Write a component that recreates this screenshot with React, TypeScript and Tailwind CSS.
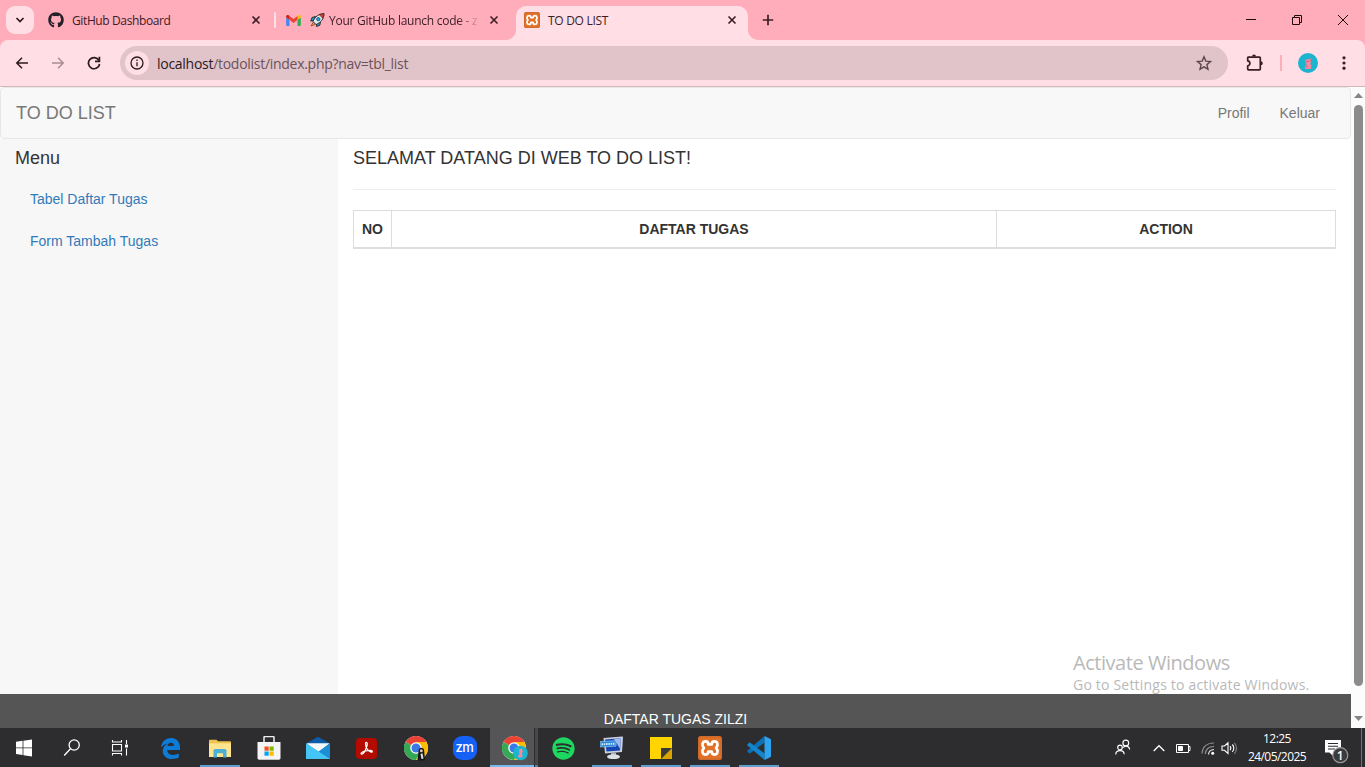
import React from "react";
import { FaGithub, FaSpotify } from "react-icons/fa";

const ui = "font-['Open_Sans','Noto_Sans',sans-serif]";

function CloseMark() {
  return (
    <svg className="block size-[10px] shrink-0" viewBox="0 0 10 10" fill="none" stroke="#3a1d25" strokeWidth="1.6">
      <path d="M1.500 1.500 8.500 8.500M8.500 1.500 1.500 8.500" />
    </svg>
  );
}

function GmailIcon() {
  return (
    <svg className="block h-[11px] w-[15px] shrink-0" viewBox="0 0 16 12">
      <path d="M1 12h2.600V5.300L0 2.600V11a1 1 0 0 0 1 1Z" fill="#4285f4" />
      <path d="M12.400 12H15a1 1 0 0 0 1-1V2.600l-3.600 2.700Z" fill="#34a853" />
      <path d="M12.400 1v4.300L16 2.600V1.500C16 .2 14.400-.5 13.300.3Z" fill="#fbbc04" />
      <path d="M3.600 5.300V1L8 4.300 12.400 1v4.300L8 8.600Z" fill="#ea4335" />
      <path d="M0 1.500v1.100l3.600 2.700V1L2.700.3C1.600-.5 0 .2 0 1.500Z" fill="#c5221f" />
    </svg>
  );
}

function RocketIcon() {
  return (
    <svg className="block h-[14px] w-[15px] shrink-0" viewBox="0 0 15 14">
      <path d="M5.500 3.500 2 4.500.7 8l3-.3ZM10.500 8.500l-.6 3.700-3.400 1.300.3-3Z" fill="#1f9fd4" stroke="#222" strokeWidth=".9" />
      <path d="M3.500 9 1 13l4.500-1.700Z" fill="#ffb02e" stroke="#7a2a10" strokeWidth=".7" />
      <path d="M3 8.500C5 3.500 8.500 1 14 .7 13.700 6 11 9.500 6 11.500Z" fill="#d8edf3" stroke="#222" strokeWidth=".9" />
      <path d="M9.300 1.700C11 1 12.300.8 14 .7c-.1 1.800-.5 3.200-1.200 4.600Z" fill="#e03a2e" stroke="#222" strokeWidth=".6" />
      <circle cx="8.300" cy="6.200" r="1.700" fill="#26a4df" stroke="#222" strokeWidth=".6" />
    </svg>
  );
}

function XamppIcon({ className }: { className: string }) {
  return (
    <svg className={"block shrink-0 " + className} viewBox="0 0 24 24">
      <rect width="24" height="24" rx="2.500" fill="#cf6a2c" />
      <rect x="1.500" y="1.500" width="21" height="21" rx="2" fill="#e27128" />
      <path
        d="M7.600 5.400c-3.300 0-4.200 4-1.700 6.600-2.500 2.600-1.600 6.600 1.700 6.600 2 0 2.700-1.300 2.700-3h3.400c0 1.700.7 3 2.700 3 3.300 0 4.200-4 1.700-6.600 2.500-2.600 1.600-6.600-1.700-6.600-2 0-2.700 1.300-2.700 3h-3.400c0-1.700-.7-3-2.700-3Z"
        fill="none"
        stroke="#fff"
        strokeWidth="2.700"
        strokeLinejoin="round"
      />
    </svg>
  );
}

function TabFlare({ flip = false }: { flip?: boolean }) {
  return (
    <svg className={flip ? "block size-[10px] shrink-0 -scale-x-100" : "block size-[10px] shrink-0"} viewBox="0 0 10 10">
      <path d="M10 0v10H0A10 10 0 0 0 10 0Z" fill="#ffdee5" />
    </svg>
  );
}

function TabStrip() {
  return (
    <div className="flex h-10 shrink-0 items-center bg-[#ffacbb] text-[12px] text-[#3a1d25]">
      <div className="ml-[6px] flex size-7 items-center justify-center rounded-[9px] bg-[#ffdee5]">
        <svg className="size-[10px]" viewBox="0 0 10 10" fill="none" stroke="#301820" strokeWidth="1.700">
          <path d="m1.500 3 3.500 3.500L8.500 3" />
        </svg>
      </div>
      <div className="ml-[14px] flex w-[213px] items-center">
        <FaGithub className="block size-4 shrink-0 text-[#24202a]" />
        <span className="ml-2 grow pt-[2px] tracking-[-0.38px] whitespace-nowrap">GitHub Dashboard</span>
        <CloseMark />
      </div>
      <div className="ml-[13px] h-4 w-[2px] rounded bg-[#ffdee5]" />
      <div className="ml-[10px] flex w-[213px] items-center">
        <GmailIcon />
        <span className="ml-[9px] block">
          <RocketIcon />
        </span>
        <span className="ml-[4px] pt-[2px] tracking-[-0.26px] whitespace-nowrap [mask-image:linear-gradient(to_right,black_128px,transparent_152px)]">
          Your GitHub launch code - z
        </span>
        <span className="ml-auto block">
          <CloseMark />
        </span>
      </div>
      <div className="ml-[7px] flex h-[34px] items-end self-end">
        <TabFlare />
        <div className="flex h-[34px] w-[232px] items-center rounded-t-[10px] bg-[#ffdee5] pr-[11px] pb-[6px] pl-2">
          <XamppIcon className="size-4" />
          <span className="ml-2 grow pt-[2px] tracking-[-0.3px] whitespace-nowrap">TO DO LIST</span>
          <CloseMark />
        </div>
        <TabFlare flip />
      </div>
      <svg className="ml-1 size-3" viewBox="0 0 12 12" stroke="#3a1d25" strokeWidth="1.700">
        <path d="M6 .8v10.400M.8 6h10.400" />
      </svg>
      <div className="ml-auto flex h-full items-center">
        <svg className="h-10 w-[46px]" viewBox="0 0 46 40" stroke="#1c0c10">
          <path d="M18 19.500h10" />
        </svg>
        <svg className="h-10 w-[46px]" viewBox="0 0 46 40" fill="none" stroke="#1c0c10">
          <path d="M18.500 17.500h7v7h-7zM20.500 17v-1.500h7v7H26" />
        </svg>
        <svg className="h-10 w-[45px]" viewBox="0 0 45 40" stroke="#1c0c10">
          <path d="m18 15 10 10M28 15 18 25" />
        </svg>
      </div>
    </div>
  );
}

function AvatarArt() {
  return (
    <svg className="block size-full" viewBox="0 0 20 20">
      <circle cx="10" cy="10" r="10" fill="#1cb5cf" />
      <path d="M7.300 8.500c0-1.500 1-2.300 2.500-2.100L13 5.500l.5 2.700-1.300 2 1.200 2.800-.6 3H7.500L6.700 13.500l2-2Z" fill="#f48a9f" />
      <path d="m8.200 8.700 2.500-.4M7.500 13l2 .8M12.600 6.500l.3 2" stroke="#b54263" strokeWidth=".8" />
    </svg>
  );
}

function Toolbar() {
  return (
    <div className="shrink-0 bg-[#ffacbb]">
      <div className="flex h-[47px] items-center rounded-t-[8px] border-b border-[#d5b6bd] bg-[#ffdee5]">
        <svg className="ml-[15px] size-[14px]" viewBox="0 0 14 14" fill="none" stroke="#2b1a20" strokeWidth="1.500">
          <path d="M13 7H2M7 1.800 1.800 7 7 12.200" />
        </svg>
        <svg className="ml-[22px] size-[14px]" viewBox="0 0 14 14" fill="none" stroke="#a98d94" strokeWidth="1.500">
          <path d="M1 7h11M7 1.800 12.200 7 7 12.200" />
        </svg>
        <svg className="ml-[22px] size-[14px]" viewBox="0 0 14 14" fill="none" stroke="#2b1a20" strokeWidth="1.700">
          <path d="M11.900 4.300A5.600 5.600 0 1 0 12.600 8" />
          <path d="M12.400.8v4.500H8" />
        </svg>
        <div className="ml-[19px] flex h-[34px] w-[1108px] items-center rounded-full bg-[#e0c4ca] pr-[16px] pl-[5px]">
          <span className="flex size-6 items-center justify-center rounded-full bg-[#ffdee5]">
            <svg className="size-[14px]" viewBox="0 0 14 14" fill="none" stroke="#2b1a20" strokeWidth="1.300">
              <circle cx="7" cy="7" r="6" />
              <path d="M7 6.300v4M7 3.500v1.500" />
            </svg>
          </span>
          <span className="ml-[8px] grow text-[14px] tracking-[-0.28px] text-[#6c5259]">
            <span className="text-[#2b1a20]">localhost</span>/todolist/index.php?nav=tbl_list
          </span>
          <svg className="size-4" viewBox="0 0 16 16" fill="none" stroke="#5f474e" strokeWidth="1.400">
            <path d="m8 1.800 1.800 4.300 4.700.4-3.600 3.100 1.100 4.600L8 11.800l-4 2.400 1.100-4.600L1.500 6.500l4.700-.4Z" />
          </svg>
        </div>
        <svg className="ml-[18px] h-[18px] w-[18px]" viewBox="0 0 18 18" fill="none" stroke="#3a1d25" strokeWidth="1.700">
          <path d="M2 3.200h11.500c.5 0 .8.300.8.800v11c0 .5-.3.800-.8.800H2.500c-.5 0-.8-.3-.8-.8v-3.200c2.900-.3 2.900-4.600 0-4.900V3.800Z" strokeLinejoin="round" />
          <path d="M6 2.600a2 2 0 0 1 4 0ZM14.800 7.300a2 2 0 0 1 0 4Z" fill="#3a1d25" stroke="none" />
        </svg>
        <div className="ml-[16px] h-4 w-[2px] bg-[#ffacbb]" />
        <div className="ml-[16px] size-5">
          <AvatarArt />
        </div>
        <svg className="ml-[24px] h-[14px] w-1" viewBox="0 0 4 14" fill="#3a1d25">
          <circle cx="2" cy="1.800" r="1.600" />
          <circle cx="2" cy="7" r="1.600" />
          <circle cx="2" cy="12.200" r="1.600" />
        </svg>
      </div>
    </div>
  );
}

function Scrollbar() {
  return (
    <div className="flex w-[14px] shrink-0 flex-col items-center bg-[#fcfcfc]">
      <svg className="mt-[6px] h-[5px] w-[9px]" viewBox="0 0 9 5">
        <path d="M4.500 0 9 5H0Z" fill="#858585" />
      </svg>
      <div className="mt-[7px] h-[581px] w-[9px] rounded-full bg-[#8b8b8b]" />
      <svg className="mt-[30px] h-[5px] w-[9px]" viewBox="0 0 9 5">
        <path d="M4.500 5 0 0h9Z" fill="#858585" />
      </svg>
    </div>
  );
}

function WebPage() {
  return (
    <div className="flex min-h-0 grow bg-white font-['Liberation_Sans',sans-serif] text-[14px] leading-5 text-[#333]">
      <div className="flex min-w-0 grow flex-col">
        <nav className="flex h-[52px] shrink-0 items-center justify-between rounded border border-[#e7e7e7] bg-[#f8f8f8] px-[15px] text-[#777]">
          <span className="text-[18px]">TO DO LIST</span>
          <div className="flex gap-[30px] pr-[15px]">
            <span>Profil</span>
            <span>Keluar</span>
          </div>
        </nav>
        <div className="flex min-h-0 grow">
          <aside className="w-[338px] shrink-0 bg-[#f7f7f7] px-[15px] pt-[9px]">
            <h4 className="text-[18px]">Menu</h4>
            <div className="mt-[21px] flex flex-col gap-[22px] pl-[15px] text-[#337ab7]">
              <a>Tabel Daftar Tugas</a>
              <a>Form Tambah Tugas</a>
            </div>
          </aside>
          <main className="flex min-w-0 grow flex-col px-[15px] pt-[9px]">
            <h4 className="text-[18px]">SELAMAT DATANG DI WEB TO DO LIST!</h4>
            <hr className="mt-[21px] mb-[20px] border-[#eee]" />
            <div className="grid h-[39px] grid-cols-[38px_605px_1fr] border border-b-2 border-[#ddd] text-center leading-[36px] font-bold">
              <div className="border-r border-[#ddd]">NO</div>
              <div className="border-r border-[#ddd]">DAFTAR TUGAS</div>
              <div>ACTION</div>
            </div>
            <div className={"mt-auto mr-[-8px] w-[271px] self-end whitespace-nowrap text-[#b9b9b9] " + ui}>
              <div className="text-[20px] leading-[24px] tracking-[-0.46px]">Activate Windows</div>
              <div className="text-[14px] leading-[19px] tracking-[0.2px]">Go to Settings to activate Windows.</div>
            </div>
          </main>
        </div>
        <footer className="h-[34px] shrink-0 bg-[#555] pt-[15px] text-center text-white">DAFTAR TUGAS ZILZI</footer>
      </div>
      <Scrollbar />
    </div>
  );
}

function ChromeArt() {
  return (
    <>
      <circle cx="12" cy="12" r="12" fill="#fff" />
      <path d="M12 12 1.600 6A12 12 0 0 1 22.400 6Z" fill="#ea4335" />
      <path d="M1.600 6A12 12 0 0 0 12 24l5.200-9L12 12Z" fill="#34a853" />
      <path d="M22.400 6A12 12 0 0 1 12 24l5.200-9L12 6Z" fill="#fbbc04" />
      <circle cx="12" cy="12" r="5.800" fill="#fff" />
      <circle cx="12" cy="12" r="4.500" fill="#3b78e7" />
    </>
  );
}

function TaskItem({ children, open = false }: { children: React.ReactNode; open?: boolean }) {
  return (
    <div className="flex h-[39px] w-[49px] shrink-0 flex-col items-center">
      <div className="flex h-[37px] items-center justify-center pt-[3px]">{children}</div>
      <div className={open ? "mt-auto h-[2px] w-10 bg-[#5f9fd0]" : "mt-auto h-[2px] w-10"} />
    </div>
  );
}

function Taskbar() {
  return (
    <div className="flex h-[39px] shrink-0 items-stretch bg-[#2d2c2f] text-white">
      <svg className="h-[39px] w-12 shrink-0" viewBox="0 0 48 39" fill="#fff">
        <path d="m16 13.800 6.600-1v6.700H16ZM23.400 12.700 32 11.500v8h-8.600ZM16 20.300h6.600V27L16 26ZM23.400 20.300H32v8.100l-8.600-1.200Z" />
      </svg>
      <svg className="h-[39px] w-12 shrink-0" viewBox="0 0 48 39" fill="none" stroke="#fff" strokeWidth="1.300">
        <circle cx="26.200" cy="17" r="5.100" />
        <path d="m22.500 20.700-6.300 6.800" />
      </svg>
      <svg className="h-[39px] w-[50px] shrink-0" viewBox="0 0 50 39" fill="none" stroke="#fff" strokeWidth="1.100">
        <path d="M16.500 16.500h9v6.500h-9zM16.500 12v2h9v-2M16.500 27.500v-2h9v2M30.500 12v4M30.500 20.500v7" />
        <path d="M29 16.500h3v3h-3z" fill="#fff" stroke="none" />
      </svg>
      <TaskItem>
        <svg className="size-[21px]" viewBox="0 0 22 22">
          <path d="M1 10C1.500 4 6 0 11.500 0 17.500 0 21 4.300 21 10v2.500H7.600c.2 4 3.200 5.200 6.300 5.200 2.300 0 4.200-.6 5.800-1.500v4.300c-2 1-4.200 1.500-6.900 1.500C6.600 22 2.900 18.300 2.900 13.500c0-3.300 1.700-6 4.900-7.600C4.900 6.200 2.500 7.700 1 10Zm6.800-1.500h6.900c0-2.300-1.300-3.500-3.300-3.500S8.100 6.400 7.800 8.500Z" fill="#0d7bd8" />
        </svg>
      </TaskItem>
      <TaskItem open>
        <svg className="h-[19px] w-[22px]" viewBox="0 0 22 19">
          <path d="M0 1.500C0 1 .3.700.8.700h6.700L9 2.300h12c.6 0 1 .3 1 .8V17H0Z" fill="#f0c250" />
          <path d="M0 4.300h22V18H0Z" fill="#ffe48f" />
          <path d="M4.500 18.500v-6.700c0-1 .7-1.800 1.800-1.800h9.400c1.100 0 1.800.8 1.800 1.800v6.700H14v-4.200H8v4.200Z" fill="#4bb0d8" />
        </svg>
      </TaskItem>
      <TaskItem>
        <svg className="h-[24px] w-[24px]" viewBox="0 0 24 24">
          <path d="M7 7V1.500c0-.6.400-1 1-1h8c.6 0 1 .4 1 1V7" fill="none" stroke="#eee" strokeWidth="1.500" />
          <path d="M.5 6h23v16c0 1-.7 1.700-1.700 1.700H2.200C1.200 23.700.5 23 .5 22Z" fill="#f5f5f5" />
          <path d="M7.500 10.500h4.200v4.200H7.500Z" fill="#f25022" />
          <path d="M12.500 10.500h4.200v4.200h-4.200Z" fill="#7fba00" />
          <path d="M7.500 15.500h4.200v4.200H7.500Z" fill="#00a4ef" />
          <path d="M12.500 15.500h4.200v4.200h-4.200Z" fill="#ffb900" />
        </svg>
      </TaskItem>
      <TaskItem>
        <svg className="h-[24px] w-[24px]" viewBox="0 0 24 24">
          <path d="M0 7.500 12 .8l12 6.700V12H0Z" fill="#0d5ca8" />
          <path d="M.5 7.300h23L12 17Z" fill="#f4f8fb" />
          <path d="M0 7.500V23h24V7.500l-11 8.200Z" fill="#28a8ea" />
          <path d="M24 7.500V23L12.500 15.500Z" fill="#1b8fd6" />
          <path d="M0 23V7.500L24 23Z" fill="#45c5f5" />
        </svg>
      </TaskItem>
      <TaskItem>
        <svg className="size-[21px]" viewBox="0 0 22 22">
          <rect width="22" height="22" rx="4" fill="#b30b00" />
          <path d="M10.800 4.500c1.300 0 1.200 2.500.3 5-1 2.800-3.500 7.500-5 7.500-1.800 0-.8-2.400 4-3.500 3.500-.9 7.200-.5 7 .7-.2 1.200-3 .2-4.800-1.700-1.800-2-3.300-8-1.500-8Z" fill="none" stroke="#fff" strokeWidth="1.300" />
        </svg>
      </TaskItem>
      <TaskItem>
        <svg className="ml-[2px] size-[25px]" viewBox="0 0 25 25">
          <ChromeArt />
          <path d="M14.500 15c-.3-4.500 6-4.500 5.700 0l.8 9.500h-7.500Z" fill="#18191d" />
          <circle cx="17.300" cy="14.800" r="1.500" fill="#e5c4b4" />
          <path d="m16.500 18 2-.8 1 5.300-2 .5Z" fill="#d9dde1" />
        </svg>
      </TaskItem>
      <TaskItem>
        <div className="flex size-6 items-center justify-center rounded-[9px] bg-[#1560f5] pb-[2px] font-['Inter',sans-serif] text-[13px] leading-none font-medium tracking-[-0.5px]">
          zm
        </div>
      </TaskItem>
      <div className="flex h-[39px] w-[49px] shrink-0 flex-col pl-px">
        <div className="flex h-[37px]">
          <div className="flex w-[44px] items-center justify-center bg-[#555558] pt-[3px] pl-[6px]">
            <svg className="h-[25px] w-[27px] shrink-0" viewBox="0 0 27 25">
              <ChromeArt />
              <circle cx="18.500" cy="17" r="7.300" fill="#1cb5cf" />
              <path d="m17 13.500 3-1 .8 3-.8 2 .5 3.500-3.500.7-1-2 1.400-1.500Z" fill="#f48a9f" />
            </svg>
          </div>
          <div className="ml-px w-[3px] bg-[#48474a]" />
        </div>
        <div className="flex h-[2px]">
          <div className="w-[44px] bg-[#76b9ed]" />
          <div className="ml-px w-[3px] bg-[#4d80a8]" />
        </div>
      </div>
      <TaskItem>
        <FaSpotify className="ml-px size-[23px] text-[#1ed760]" />
      </TaskItem>
      <TaskItem open>
        <svg className="h-[24px] w-[24px]" viewBox="0 0 24 24">
          <path d="M3.500 2 22 .5c.8 0 1 .4 1 1L22 16 5 17.500Z" fill="#c7d0dc" />
          <path d="m5 3.500 16-1.300L20 14.500 6.500 15.500Z" fill="#1845b5" />
          <path d="m14 3 7-.8L20.200 13Z" fill="#a3b8ee" />
          <path d="M11 16.500h5v3.500h-5Z" fill="#a7b1bc" />
          <ellipse cx="13.500" cy="20.700" rx="6.500" ry="2.400" fill="#dce1e6" />
          <path d="m0 5.500 16-.8v5.500L0 11Z" fill="#2b89d8" stroke="#a9d5f4" strokeWidth=".6" />
          <path d="m1.500 8.300 13-.6" stroke="#d5eafa" strokeWidth="2" strokeDasharray="1.500 .8" />
        </svg>
      </TaskItem>
      <TaskItem open>
        <svg className="size-[22px]" viewBox="0 0 22 22">
          <path d="M0 0h22v11L11 22H0Z" fill="#ffd400" />
          <path d="M22 11v11H11Z" fill="#d8a500" />
          <path d="M11 11h11L11 22Z" fill="#3b3a39" />
        </svg>
      </TaskItem>
      <TaskItem open>
        <XamppIcon className="size-[24px]" />
      </TaskItem>
      <TaskItem open>
        <svg className="size-[24px]" viewBox="0 0 24 24">
          <path d="M17.500 0v6.500L3.300 17.200c-.4.300-.8.300-1.200 0L.5 15.800c-.4-.4-.4-1 0-1.400Z" fill="#0b72b5" />
          <path d="M17.500 24v-6.500L3.300 6.800c-.4-.3-.8-.3-1.200 0L.5 8.200c-.4.400-.4 1 0 1.400Z" fill="#1485cc" />
          <path d="m17.500 0 5.700 2.800c.5.200.8.700.8 1.200v16c0 .5-.3 1-.8 1.200L17.500 24Z" fill="#2ea3ef" />
        </svg>
      </TaskItem>
      <div className={"ml-auto flex items-center " + ui}>
        <svg className="h-[39px] w-[20px]" viewBox="0 0 20 39" fill="none" stroke="#fff" strokeWidth="1.200">
          <circle cx="12.800" cy="15" r="2.900" />
          <circle cx="7" cy="19.500" r="2.300" />
          <path d="M2.800 26.500c0-5 8.200-5.200 8.400-.2M10.300 19.500c2.600-2.500 6-1 6.400 2" />
        </svg>
        <svg className="ml-[20px] h-[39px] w-[12px]" viewBox="0 0 12 39" fill="none" stroke="#fff" strokeWidth="1.300">
          <path d="m.7 23 5.300-5.300 5.300 5.300" />
        </svg>
        <svg className="ml-[11px] h-[39px] w-[15px]" viewBox="0 0 15 39" fill="none" stroke="#fff">
          <path d="M.5 16.500h12v8H.5zM12.500 18.500h1.500v4h-1.500" />
          <path d="M2.500 18.500h4v4h-4z" fill="#fff" />
        </svg>
        <svg className="ml-[10px] h-[39px] w-[14px]" viewBox="0 0 14 39" fill="none" stroke="#8c8c8e" strokeWidth="1.200">
          <path d="M1 25.500C1.500 19 6 15 13 15M4.300 26c.3-4.500 3.500-7.500 8.700-7.700" />
          <path d="M7.500 26.500c.2-3 2.200-4.800 5.500-5" stroke="#ddd" />
          <circle cx="11.700" cy="25.300" r="1.500" fill="#fff" stroke="none" />
        </svg>
        <svg className="ml-[6px] h-[39px] w-[17px]" viewBox="0 0 17 39" fill="none" stroke="#fff" strokeWidth="1.100">
          <path d="M1 18h2.500L7 14.800v10.700L3.500 22.300H1ZM9 18.200c1 1.200 1 2.800 0 4" />
          <path d="M11.300 16.500c2 2 2 5.300 0 7.400" />
          <path d="M13.400 14.800c2.800 3 2.800 8 0 11" stroke="#858587" />
        </svg>
        <div className="ml-[5px] flex w-[69px] flex-col items-center pt-px pr-[1px] text-[12px] leading-[18px] tracking-[-0.55px] whitespace-nowrap">
          <span>12:25</span>
          <span>24/05/2025</span>
        </div>
        <svg className="ml-[10px] h-[39px] w-[28px]" viewBox="0 0 28 39">
          <path d="M3 12h16v12.500H11V28l-3.500-3.500H3Z" fill="#fff" />
          <path d="M6 15.500h10M6 18.300h10M6 21h7" stroke="#2d2c2f" strokeWidth="1.100" />
          <circle cx="18.300" cy="27.200" r="7.500" fill="#3b3b3d" stroke="#9a9a9c" strokeWidth="1.200" />
          <text x="18.300" y="31.500" fill="#fff" fontSize="12" fontWeight="600" fontFamily="Open Sans, sans-serif" textAnchor="middle">
            1
          </text>
        </svg>
        <div className="mr-[3px] ml-[11px] h-[39px] w-px bg-[#737375]" />
      </div>
    </div>
  );
}

export default function App() {
  return (
    <div className={"flex h-[767px] w-[1365px] flex-col overflow-hidden " + ui}>
      <TabStrip />
      <Toolbar />
      <WebPage />
      <Taskbar />
    </div>
  );
}
